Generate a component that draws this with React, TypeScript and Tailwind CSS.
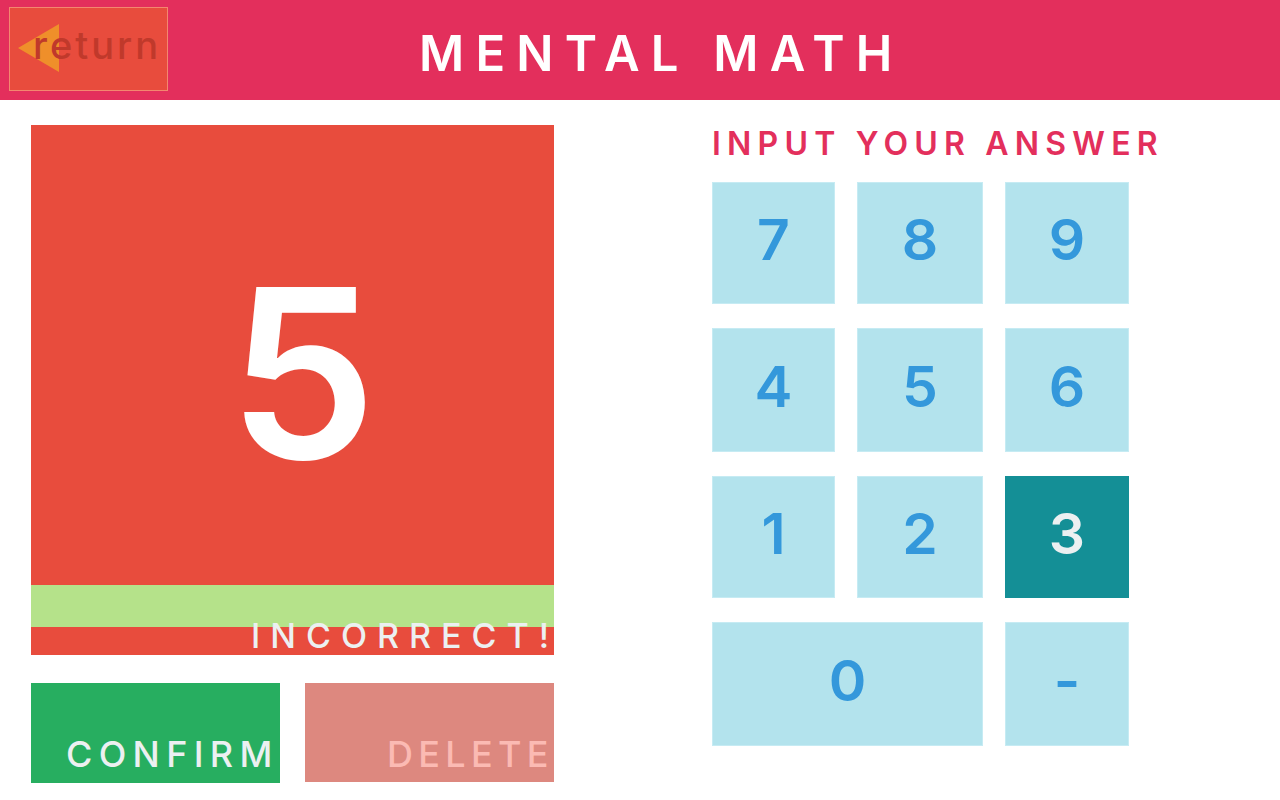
const font = { fontFamily: 'Inter, "Liberation Sans", sans-serif' }

function Key({ label, active, wide }: { label: string; active?: boolean; wide?: boolean }) {
  return (
    <div
      className={
        active
          ? 'flex items-center justify-center bg-[#148f96] text-[#ecf0f1]'
          : wide
          ? 'col-span-2 flex items-center justify-center border border-[#c6ebf3] bg-[#b3e3ed] text-[#3498db]'
          : 'flex items-center justify-center border border-[#c6ebf3] bg-[#b3e3ed] text-[#3498db]'
      }
    >
      <span className="pb-[8px] text-[57px] font-semibold leading-none">{label}</span>
    </div>
  )
}

export default function App() {
  return (
    <div className="h-[800px] w-[1280px] overflow-hidden bg-white" style={font}>
      {/* Header */}
      <div className="flex h-[100px] items-start bg-[#e32f5c]">
        <div className="relative ml-[9px] mt-[7px] h-[84px] w-[159px] border border-[#f3876f] bg-[#e84c3d]">
          <svg className="absolute left-[8px] top-[16px]" width="42" height="50" viewBox="0 0 42 50">
            <polygon points="0,24 41,0 41,48" fill="#ef8f2a" />
          </svg>
          <span className="absolute left-[23px] top-[18px] text-[38px] font-medium leading-none tracking-[3px] text-[#c0392b]">
            return
          </span>
        </div>
        <h1 className="ml-[251px] mt-[29px] whitespace-nowrap text-[49px] font-semibold leading-none tracking-[11.2px] text-white">
          MENTAL MATH
        </h1>
      </div>

      {/* Main */}
      <div className="flex pl-[31px] pt-[25px]">
        {/* Left */}
        <div className="flex w-[523px] flex-col">
          <div className="flex h-[530px] flex-col bg-[#e84c3d]">
            <div className="flex h-[460px] justify-center pl-[20px] pt-[130px]">
              <span className="text-[236px] font-semibold leading-none text-white">5</span>
            </div>
            <div className="h-[42px] bg-[#b5e28a]" />
            <div className="h-[28px]">
              <div className="-mt-[8px] whitespace-nowrap pl-[220px] text-[34px] font-medium leading-none tracking-[10px] text-[#ecf0f1]">
                INCORRECT!
              </div>
            </div>
          </div>
          <div className="mt-[28px] flex gap-[25px]">
            <div className="h-[100px] w-[249px] whitespace-nowrap bg-[#27ae60] pl-[35px] pt-[53px] text-[36px] font-medium leading-none tracking-[6.3px] text-[#ecf0f1]">
              CONFIRM
            </div>
            <div className="h-[99px] w-[249px] whitespace-nowrap bg-[#dd887f] pl-[82px] pt-[53px] text-[36px] font-medium leading-none tracking-[5.3px] text-[#fbbab3]">
              DELETE
            </div>
          </div>
        </div>

        {/* Right */}
        <div className="ml-[158px] flex flex-col">
          <div className="whitespace-nowrap pt-[3px] text-[32px] font-semibold leading-none tracking-[6.2px] text-[#e32f5c]">
            INPUT YOUR ANSWER
          </div>
          <div className="mt-[22px] grid grid-cols-[123px_126px_124px] grid-rows-[122px_124px_122px_124px] gap-x-[22px] gap-y-[24px]">
            <Key label="7" />
            <Key label="8" />
            <Key label="9" />
            <Key label="4" />
            <Key label="5" />
            <Key label="6" />
            <Key label="1" />
            <Key label="2" />
            <Key label="3" active />
            <Key label="0" wide />
            <Key label="-" />
          </div>
        </div>
      </div>
    </div>
  )
}
